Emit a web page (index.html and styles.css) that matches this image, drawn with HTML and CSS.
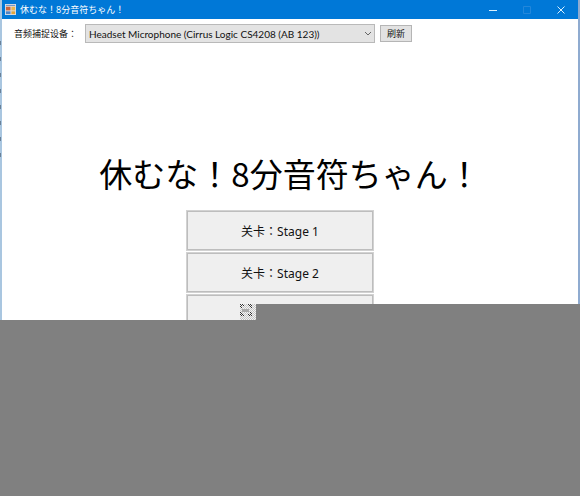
FILE: index.html
```html
<!DOCTYPE html>
<html lang="ja">
<head>
<meta charset="utf-8">
<title>休むな！8分音符ちゃん！</title>
<link rel="stylesheet" href="styles.css">
</head>
<body>
<div class="window">
  <header class="titlebar">
    <svg class="app-icon" viewBox="0 0 12 12" aria-hidden="true">
      <rect width="12" height="12" fill="#d9dde4"/>
      <rect x="1" y="1" width="10" height="1" fill="#5e8bc0"/>
      <rect x="1" y="3" width="5" height="4" fill="#c9653f"/>
      <rect x="7" y="3" width="4" height="4" fill="#e9b64e"/>
      <rect x="1" y="8" width="5" height="3" fill="#4f84c4"/>
      <rect x="7" y="8" width="4" height="3" fill="#e0a53c"/>
    </svg>
    <span class="caption">休むな！8分音符ちゃん！</span>
    <div class="controls">
      <button class="control" type="button" aria-label="Minimize"><svg viewBox="0 0 10 10"><path d="M1 5.500H9"/></svg></button>
      <button class="control" type="button" aria-label="Maximize" disabled><svg viewBox="0 0 10 10"><path d="M1.500 1.500H8.500V8.500H1.500Z"/></svg></button>
      <button class="control" type="button" aria-label="Close"><svg viewBox="0 0 10 10"><path d="M1.500 1.500L8.500 8.500M8.500 1.500L1.500 8.500"/></svg></button>
    </div>
  </header>
  <main class="content">
    <form class="toolbar" lang="zh-Hans">
      <label class="device-label" for="device">音频捕捉设备<span class="colon" lang="zh-Hant">：</span></label>
      <div class="picker">
        <select class="device" id="device">
          <option>Headset Microphone (Cirrus Logic CS4208 (AB 123))</option>
        </select>
        <svg class="chevron" viewBox="0 0 8 6" aria-hidden="true"><path d="M1 1L4 4L7 1"/></svg>
      </div>
      <button class="refresh" type="button">刷新</button>
    </form>
    <h1 class="title">休むな！8分音符ちゃん！</h1>
    <div class="stages" lang="zh-Hans">
      <button class="stage" type="button">关卡<span class="colon" lang="zh-Hant">：</span>Stage 1</button>
      <button class="stage" type="button">关卡<span class="colon" lang="zh-Hant">：</span>Stage 2</button>
      <button class="stage" type="button" aria-label="Stage"></button>
    </div>
  </main>
  <div class="blank"></div>
  <svg class="noise" viewBox="0 0 16 16" aria-hidden="true" shape-rendering="crispEdges">
    <defs>
      <pattern id="check" width="2" height="2" patternUnits="userSpaceOnUse">
        <path d="M0 0h1v1h-1zM1 1h1v1h-1z" fill="#333"/>
      </pattern>
      <pattern id="soft" width="2" height="2" patternUnits="userSpaceOnUse">
        <path d="M0 0h1v1h-1zM1 1h1v1h-1z" fill="#c4c4c4"/>
      </pattern>
    </defs>
    <rect width="16" height="16" fill="#f2f2f2"/>
    <rect width="16" height="16" fill="url(#soft)"/>
    <path d="M0 0h4v2h-2v2h-2zM8 0h4v4h-2v-2h-2zM0 8h2v2h2v2h-4zM8 10h2v-2h2v4h-4z" fill="url(#check)"/>
    <path d="M2 5h7v3h-7z" fill="#aaa"/>
  </svg>
</div>
</body>
</html>
```
FILE: styles.css
```css
* {
  box-sizing: border-box;
}

body {
  margin: 0;
  font-family: "Noto Sans", "Noto Sans CJK SC", sans-serif;
  color: #111;
  background: #fff;
}

button,
select {
  font: inherit;
  color: inherit;
}

.window {
  position: relative;
  min-height: 100vh;
  padding: 0 2px;
  background:
    repeating-linear-gradient(#6a8198 0 4px, transparent 4px 16px) 0 41px / 1px 118px no-repeat,
    linear-gradient(#a9c6e0, #a9c6e0) 0 0 / 2px 100% no-repeat,
    linear-gradient(#8fabd0, #8fabd0) 100% 0 / 2px 100% no-repeat,
    #fff;
  overflow: hidden;
}

.titlebar {
  display: flex;
  align-items: center;
  height: 19px;
  padding-left: 3px;
  color: #fff;
  background: #0078d7;
}

.app-icon {
  width: 11px;
  height: 11px;
}

.caption {
  margin-left: 4px;
  font-family: "Open Sans", "Noto Sans CJK JP", sans-serif;
  font-size: 9px;
  line-height: 18px;
}

.controls {
  display: flex;
  margin-left: auto;
}

.control {
  display: flex;
  align-items: center;
  justify-content: center;
  width: 34px;
  height: 19px;
  padding: 0;
  border: 0;
  background: none;
}

.control svg {
  width: 10px;
  height: 10px;
  fill: none;
  stroke: #d8f0ff;
  stroke-width: 1;
}

.control:disabled svg {
  stroke: #2387db;
}

.content {
  display: flex;
  flex-direction: column;
  align-items: center;
}

.toolbar {
  display: flex;
  align-items: center;
  align-self: stretch;
  height: 29px;
  padding-left: 12px;
  font-size: 9px;
}

.colon {
  font-family: "Noto Sans CJK TC", sans-serif;
}

.device-label {
  width: 71px;
  white-space: nowrap;
}

.picker {
  position: relative;
  width: 290px;
}

.device {
  display: block;
  width: 100%;
  height: 19px;
  padding: 0 3px;
  border: 1px solid #b9b9b9;
  border-radius: 0;
  background: #e3e3e3;
  font-family: Lato, "Noto Sans", sans-serif;
  font-size: 10px;
  appearance: none;
}

.chevron {
  position: absolute;
  top: 7px;
  right: 3px;
  width: 8px;
  height: 6px;
  fill: none;
  stroke: #666;
}

.refresh {
  width: 32px;
  height: 17px;
  margin-left: 5px;
  padding: 0;
  border: 1px solid #b5b5b5;
  background: #e2e2e2;
  line-height: 14px;
}

.title {
  margin: 100px 0 0;
  font-family: "Noto Sans CJK JP", sans-serif;
  font-size: 33px;
  font-weight: 400;
  line-height: 50px;
  white-space: nowrap;
  color: #000;
}

.stages {
  display: flex;
  flex-direction: column;
  gap: 1px;
  width: 188px;
  margin-top: 12px;
  margin-right: 20px;
}

.stage {
  height: 41px;
  padding: 0;
  border: 1px solid #d2d2d2;
  outline: 1px solid #bdbdbd;
  outline-offset: -2px;
  background: #efefef;
  font-size: 12px;
}

.blank {
  position: absolute;
  inset: 304px 0 0;
  background: #808080;
  clip-path: polygon(256px 0, 100% 0, 100% 100%, 0 100%, 0 16px, 256px 16px);
}

.noise {
  position: absolute;
  top: 304px;
  left: 240px;
  width: 16px;
  height: 16px;
}
```
